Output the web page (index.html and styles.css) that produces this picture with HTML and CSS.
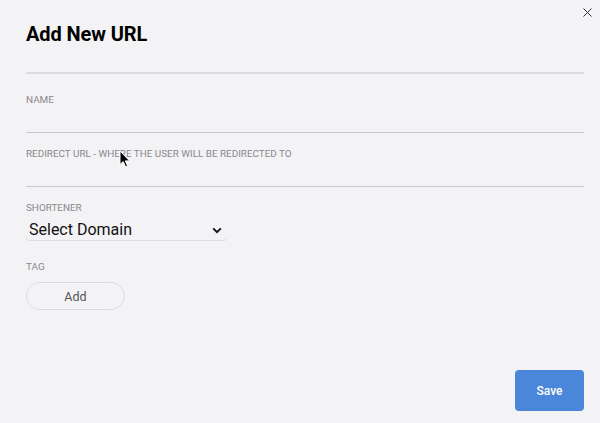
FILE: index.html
```html
<!DOCTYPE html>
<html>

<head>
  <title>Add New URL</title>
  <link rel="stylesheet" href="styles.css">
</head>

<body>
  <div class="modal">
    <button class="close" aria-label="Close">
      <svg width="9" height="9" viewBox="0 0 9 9"><path d="M0.5 0.5L8.5 8.5M8.5 0.5L0.5 8.5" stroke="#333" stroke-width="1" fill="none"/></svg>
    </button>

    <h1 class="title">Add New URL</h1>
    <div class="divider"></div>

    <div class="field first">
      <label class="label">Name</label>
      <div class="input"></div>
    </div>

    <div class="field">
      <label class="label">Redirect URL - where the user will be redirected to</label>
      <div class="input"></div>
    </div>

    <div class="field">
      <label class="label">Shortener</label>
      <div class="select">
        <span>Select Domain</span>
        <svg width="10" height="7" viewBox="0 0 10 7"><path d="M1.2 1.3L5 5.1L8.8 1.3" stroke="#111" stroke-width="1.9" fill="none"/></svg>
      </div>
    </div>

    <div class="field tag">
      <label class="label">Tag</label>
      <button class="add">Add</button>
    </div>

    <div class="footer">
      <button class="save">Save</button>
    </div>

    <svg class="cursor" width="12" height="18" viewBox="0 0 12 18"><path d="M1 1L1 14.5L4.2 11.6L6.6 16.8L8.6 15.9L6.3 10.9L10.6 10.9Z" fill="#000" stroke="#fff" stroke-width="1"/></svg>
  </div>
</body>

</html>
```

FILE: styles.css
```css
body {
  margin: 0;
  background: #f3f2f5;
  font-family: Roboto, "Liberation Sans", Arial, sans-serif;
}

.modal {
  position: relative;
  height: 423px;
  box-sizing: border-box;
  padding: 22px 16px 12px 26px;
  display: flex;
  flex-direction: column;
}

.close {
  position: absolute;
  top: 8px;
  right: 8px;
  border: none;
  background: none;
  padding: 0;
  width: 9px;
  height: 9px;
  display: flex;
}

.title {
  margin: 0;
  font-size: 20px;
  line-height: 24px;
  font-weight: 700;
  color: #000;
  letter-spacing: -0.1px;
}

.divider {
  margin-top: 26px;
  height: 2px;
  background: #dcdbde;
}

.field {
  margin-top: 14px;
  display: flex;
  flex-direction: column;
  align-items: flex-start;
}

.field.first {
  margin-top: 19px;
}

.field.tag {
  margin-top: 20px;
}

.label {
  font-size: 9.9px;
  line-height: 13px;
  text-transform: uppercase;
  color: #8a898c;
}

.input {
  align-self: stretch;
  height: 26px;
  border-bottom: 1px solid #c9c8cb;
}

.select {
  margin-top: 6px;
  width: 195px;
  height: 20px;
  padding: 0 3px;
  display: flex;
  align-items: center;
  justify-content: space-between;
  font-size: 16px;
  line-height: 20px;
  color: #111;
  border-radius: 0 0 4px 4px;
  box-shadow: 0 1px 0 #dddce0;
}

.select svg {
  margin-right: 2px;
}

.add {
  margin-top: 9px;
  width: 99px;
  height: 28px;
  border: 1px solid #dbdadd;
  border-radius: 14px;
  background: transparent;
  font-family: inherit;
  font-size: 12.5px;
  color: #555;
}

.footer {
  margin-top: auto;
  display: flex;
  justify-content: flex-end;
}

.save {
  width: 69px;
  height: 41px;
  border: none;
  border-radius: 4px;
  background: #4a86d9;
  color: #fff;
  font-family: inherit;
  font-size: 12px;
  font-weight: 500;
}

.cursor {
  position: absolute;
  left: 119px;
  top: 150px;
}
```
